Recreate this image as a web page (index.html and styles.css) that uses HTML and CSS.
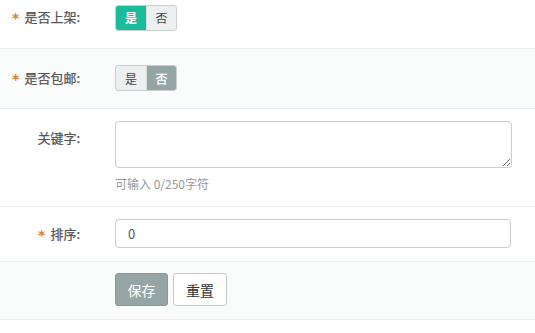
FILE: index.html
```html
<!DOCTYPE html>
<html lang="zh">
<head>
<meta charset="utf-8">
<link rel="stylesheet" href="styles.css">
</head>
<body>
<form class="form">
  <div class="row row-first">
    <label class="label"><span class="req">*</span>是否上架:</label>
    <div class="field">
      <div class="toggle">
        <span class="opt on-green">是</span><span class="opt">否</span>
      </div>
    </div>
  </div>
  <div class="row row-alt row-toggle">
    <label class="label"><span class="req">*</span>是否包邮:</label>
    <div class="field">
      <div class="toggle">
        <span class="opt">是</span><span class="opt on-grey">否</span>
      </div>
    </div>
  </div>
  <div class="row row-text">
    <label class="label label-top">关键字:</label>
    <div class="field">
      <textarea class="textarea"></textarea>
      <div class="hint">可输入 0/250字符</div>
    </div>
  </div>
  <div class="row row-input">
    <label class="label"><span class="req">*</span>排序:</label>
    <div class="field">
      <input class="input" type="text" value="0">
    </div>
  </div>
  <div class="row row-alt row-actions">
    <div class="label"></div>
    <div class="field buttons">
      <button type="button" class="btn btn-save">保存</button>
      <button type="button" class="btn btn-reset">重置</button>
    </div>
  </div>
</form>
</body>
</html>
```

FILE: styles.css
```css
* { box-sizing: border-box; }
html, body {
  margin: 0;
  padding: 0;
  background: #fff;
  font-family: "Noto Sans CJK SC", "Open Sans", sans-serif;
  color: #555;
}
.form {
  width: 535px;
}
.row {
  display: flex;
  align-items: center;
  border-bottom: 1px solid #eceeee;
  background: #fff;
}
.row-alt { background: #fafbfb; }
.row-first { padding: 4px 0 17px; }
.row-toggle { padding: 16px 0 17px; }
.row-text { padding: 12px 0 0; align-items: flex-start; height: 98px; }
.row-input { padding: 12px 0 13px; }
.row-actions { padding: 11px 0 13px; }

.label {
  width: 80px;
  flex: none;
  display: flex;
  align-items: center;
  justify-content: flex-end;
  font-size: 13px;
  font-weight: normal;
  color: #555;
  line-height: 18px;
  -webkit-text-stroke: 0.25px #555;
}
.label-top { margin-top: 8px; }
.req {
  color: #e67e22;
  font-family: "DejaVu Sans", sans-serif;
  font-weight: bold;
  font-size: 14px;
  -webkit-text-stroke: 0;
  margin-right: 5px;
  position: relative;
  top: 1px;
}
.field {
  margin-left: 35px;
  flex: 1;
  padding-right: 23px;
}
.toggle {
  display: inline-flex;
  height: 26px;
  border-radius: 3px;
  overflow: hidden;
  border: 1px solid #c9cfcf;
  background: #ecf0f1;
}
.opt {
  width: 30px;
  display: flex;
  align-items: center;
  justify-content: center;
  font-size: 12px;
  color: #444;
}
.opt + .opt { border-left: 1px solid #d7dcdc; }
.on-green {
  background: #1abc9c;
  color: #fff;
  font-weight: bold;
}
.on-grey {
  background: #95a5a6;
  color: #fff;
  -webkit-text-stroke: 0.3px #fff;
}
.textarea {
  display: block;
  width: 397px;
  height: 47px;
  border: 1px solid #ccc;
  border-radius: 4px;
  resize: vertical;
  font-family: inherit;
  font-size: 13px;
  padding: 6px 12px;
  background: #fff;
}
.hint {
  margin-top: 8px;
  font-size: 12px;
  color: #999;
  line-height: 16px;
}
.input {
  display: block;
  width: 396px;
  height: 29px;
  border: 1px solid #ccc;
  border-radius: 4px;
  padding: 0 12px;
  font-family: inherit;
  font-size: 13px;
  color: #555;
  background: #fff;
}
.buttons {
  display: flex;
  gap: 5px;
}
.btn {
  height: 33px;
  border-radius: 3px;
  font-family: inherit;
  font-size: 14px;
  padding: 0;
  cursor: pointer;
}
.btn-save {
  width: 53px;
  background: #95a5a6;
  border: 1px solid #8a9a9b;
  color: #fff;
}
.btn-reset {
  width: 54px;
  background: #fff;
  border: 1px solid #ccc;
  color: #333;
}
```
